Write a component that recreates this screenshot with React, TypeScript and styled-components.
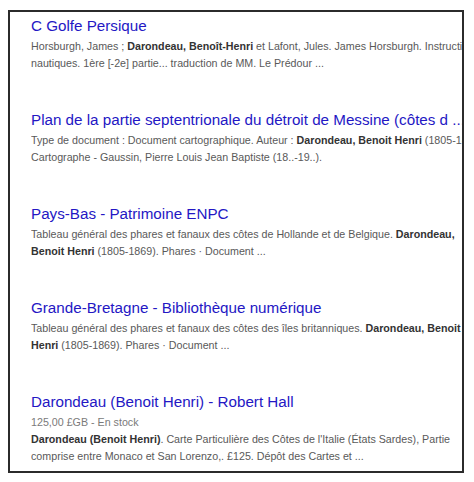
import React from "react";
import styled, { createGlobalStyle } from "styled-components";

type Snippet = {
  title: string;
  meta?: string;
  lines: React.ReactNode[];
};

const results: Snippet[] = [
  {
    title: "C Golfe Persique",
    lines: [
      <>
        Horsburgh, James ; <b>Darondeau, Benoît-Henri</b> et Lafont, Jules. James Horsburgh. Instructions
      </>,
      <>nautiques. 1ère [-2e] partie... traduction de MM. Le Prédour ...</>,
    ],
  },
  {
    title: "Plan de la partie septentrionale du détroit de Messine (côtes d ...",
    lines: [
      <>
        Type de document : Document cartographique. Auteur : <b>Darondeau, Benoit Henri</b> (1805-1869).
      </>,
      <>Cartographe - Gaussin, Pierre Louis Jean Baptiste (18..-19..).</>,
    ],
  },
  {
    title: "Pays-Bas - Patrimoine ENPC",
    lines: [
      <>
        Tableau général des phares et fanaux des côtes de Hollande et de Belgique. <b>Darondeau,</b>
      </>,
      <>
        <b>Benoit Henri</b> (1805-1869). Phares · Document ...
      </>,
    ],
  },
  {
    title: "Grande-Bretagne - Bibliothèque numérique",
    lines: [
      <>
        Tableau général des phares et fanaux des côtes des îles britanniques. <b>Darondeau, Benoit</b>
      </>,
      <>
        <b>Henri</b> (1805-1869). Phares · Document ...
      </>,
    ],
  },
  {
    title: "Darondeau (Benoit Henri) - Robert Hall",
    meta: "125,00 £GB - En stock",
    lines: [
      <>
        <b>Darondeau (Benoit Henri)</b>. Carte Particulière des Côtes de l'Italie (États Sardes), Partie
      </>,
      <>comprise entre Monaco et San Lorenzo,. £125. Dépôt des Cartes et ...</>,
    ],
  },
];

export default function App() {
  return (
    <>
      <GlobalStyle />
      <Frame>
        {results.map((r) => (
          <Result key={r.title}>
            <Title href="#">{r.title}</Title>
            {r.meta ? <Meta>{r.meta}</Meta> : null}
            {r.lines.map((line, i) => (
              <Line key={i}>{line}</Line>
            ))}
          </Result>
        ))}
      </Frame>
    </>
  );
}

const GlobalStyle = createGlobalStyle`
  html, body {
    margin: 0;
    padding: 0;
    background: #fff;
    font-family: "Liberation Sans", Arial, sans-serif;
  }
`;

const Frame = styled.main`
  margin: 10px 0 0 8px;
  width: 456px;
  height: 463px;
  box-sizing: border-box;
  border: 2px solid #2b2b2b;
  padding: 5px 0 0 21px;
  overflow: hidden;
  display: flex;
  flex-direction: column;
  gap: 40px;
  background: #fff;
`;

const Result = styled.section`
  display: flex;
  flex-direction: column;
  min-width: 0;
`;

const Title = styled.a`
  display: block;
  font-size: 15.2px;
  line-height: 18px;
  margin-bottom: 3px;
  color: #2417c4;
  text-decoration: none;
  white-space: nowrap;
  overflow: hidden;
`;

const Meta = styled.div`
  font-size: 10.7px;
  line-height: 17px;
  color: #7a7a7a;
  white-space: nowrap;
`;

const Line = styled.div`
  font-size: 10.7px;
  line-height: 16.5px;
  color: #595959;
  white-space: nowrap;
  overflow: hidden;

  b {
    color: #333;
    font-weight: bold;
  }
`;
